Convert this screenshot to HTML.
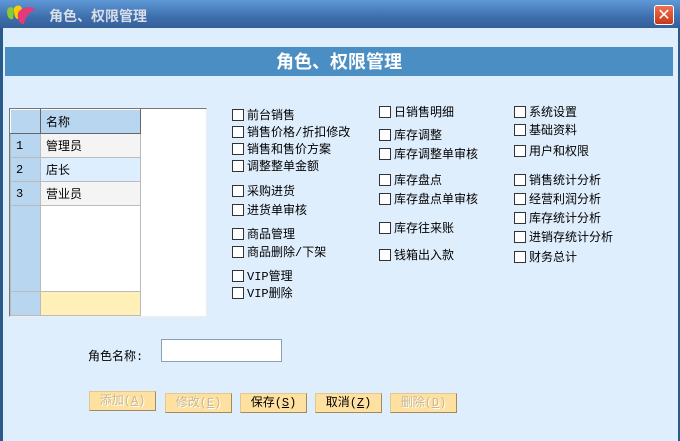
<!DOCTYPE html>
<html><head><meta charset="utf-8"><style>
*{margin:0;padding:0;box-sizing:border-box}
body{width:680px;height:441px;overflow:hidden;background:#dfeefd;font-family:"Liberation Mono","Noto Sans CJK SC",monospace;font-size:12px;color:#000;position:relative}
.a{position:absolute}
.title{left:0;top:0;width:680px;height:28px;background:linear-gradient(#5f98d6,#3e6fad 60%,#355f98)}
.cb{position:absolute;font-size:12px;line-height:14px;white-space:nowrap}
.cb i{display:inline-block;width:12px;height:12px;border:1px solid #333;background:#fff;vertical-align:-2px;margin-right:3px}
.btn{position:absolute;width:67px;height:20px;background:#fee1a0;border:1px solid #e0c890;border-right-color:#a08a60;border-bottom-color:#a08a60;text-align:center;line-height:18px;font-size:12px}
.dis{color:#c8b890;text-shadow:1px 1px 0 #fff}
td{border:1px solid #bbb;height:24px;padding:0 5px;font-size:12px}
</style></head><body>
<div class="a title"></div>
<svg class="a" style="left:6px;top:4px" width="30" height="22"><path d="M1 7c1-5 6-5 7-1l-1 9c-3 1-6-1-6-8z" fill="#8c3"/><path d="M8 4c3-4 8-3 8 2l-4 9c-3 0-4-4-4-11z" fill="#fc0"/><path d="M12 9c4-7 14-7 17-4-3 3-9 5-11 15-5 0-7-5-6-11z" fill="#e23a7a"/></svg>
<div class="a" style="left:49px;top:6px;color:#d8dde8;font-weight:bold;font-size:14px;font-family:'Noto Sans CJK SC',sans-serif">角色、权限管理</div>
<div class="a" style="left:654px;top:5px;width:20px;height:20px;background:linear-gradient(#f07050,#c83818);border:1px solid #fff;border-radius:3px;color:#fff;text-align:center;font-size:16px;line-height:17px;font-weight:bold;font-family:'DejaVu Sans',sans-serif">✕</div>
<div class="a" style="left:0;top:28px;width:3px;height:413px;background:#2a5a8a"></div>
<div class="a" style="left:676px;top:28px;width:4px;height:413px;background:#2a5a8a;border-left:2px solid #dfeefd"></div>
<div class="a" style="left:5px;top:47px;width:668px;height:29px;background:#4a8ec4;color:#fff;font-size:18px;font-weight:bold;text-align:center;line-height:29px;font-family:'Noto Sans CJK SC',sans-serif">角色、权限管理</div>
<div class="a" style="left:9px;top:108px;width:198px;height:209px;background:#fff;border:1px solid #777;border-right-color:#eee;border-bottom-color:#eee">
<table style="border-collapse:collapse;width:131px">
<tr><td style="width:30px;background:#b8d6f0;border-color:#fff #666 #666 #fff"></td><td style="background:#b8d6f0;border-color:#fff #666 #666 #fff">名称</td></tr>
<tr><td style="background:#b8d6f0">1</td><td style="background:#f4f4f4">管理员</td></tr>
<tr><td style="background:#b8d6f0">2</td><td style="background:#ddeeff">店长</td></tr>
<tr><td style="background:#b8d6f0">3</td><td style="background:#f4f4f4">营业员</td></tr>
<tr><td style="background:#b8d6f0;height:86px"></td><td style="background:#fff"></td></tr>
<tr><td style="background:#b8d6f0;height:24px"></td><td style="background:#fff0b8"></td></tr>
</table></div>
<div class="cb" style="left:232px;top:109px"><i></i>前台销售</div>
<div class="cb" style="left:232px;top:126px"><i></i>销售价格/折扣修改</div>
<div class="cb" style="left:232px;top:143px"><i></i>销售和售价方案</div>
<div class="cb" style="left:232px;top:160px"><i></i>调整整单金额</div>
<div class="cb" style="left:232px;top:185px"><i></i>采购进货</div>
<div class="cb" style="left:232px;top:204px"><i></i>进货单审核</div>
<div class="cb" style="left:232px;top:228px"><i></i>商品管理</div>
<div class="cb" style="left:232px;top:246px"><i></i>商品删除/下架</div>
<div class="cb" style="left:232px;top:270px"><i></i>VIP管理</div>
<div class="cb" style="left:232px;top:287px"><i></i>VIP删除</div>
<div class="cb" style="left:379px;top:106px"><i></i>日销售明细</div>
<div class="cb" style="left:379px;top:129px"><i></i>库存调整</div>
<div class="cb" style="left:379px;top:148px"><i></i>库存调整单审核</div>
<div class="cb" style="left:379px;top:174px"><i></i>库存盘点</div>
<div class="cb" style="left:379px;top:193px"><i></i>库存盘点单审核</div>
<div class="cb" style="left:379px;top:222px"><i></i>库存往来账</div>
<div class="cb" style="left:379px;top:249px"><i></i>钱箱出入款</div>
<div class="cb" style="left:514px;top:106px"><i></i>系统设置</div>
<div class="cb" style="left:514px;top:124px"><i></i>基础资料</div>
<div class="cb" style="left:514px;top:145px"><i></i>用户和权限</div>
<div class="cb" style="left:514px;top:174px"><i></i>销售统计分析</div>
<div class="cb" style="left:514px;top:193px"><i></i>经营利润分析</div>
<div class="cb" style="left:514px;top:212px"><i></i>库存统计分析</div>
<div class="cb" style="left:514px;top:231px"><i></i>进销存统计分析</div>
<div class="cb" style="left:514px;top:251px"><i></i>财务总计</div>
<div class="a" style="left:88px;top:347px">角色名称:</div>
<div class="a" style="left:161px;top:339px;width:121px;height:23px;background:#fff;border:1px solid #8aa0b8"></div>
<div class="btn dis" style="left:89px;top:391px">添加(<u>A</u>)</div>
<div class="btn dis" style="left:165px;top:393px">修改(<u>E</u>)</div>
<div class="btn" style="left:240px;top:393px">保存(<u>S</u>)</div>
<div class="btn" style="left:315px;top:393px">取消(<u>Z</u>)</div>
<div class="btn dis" style="left:390px;top:393px">删除(<u>D</u>)</div>
</body></html>
